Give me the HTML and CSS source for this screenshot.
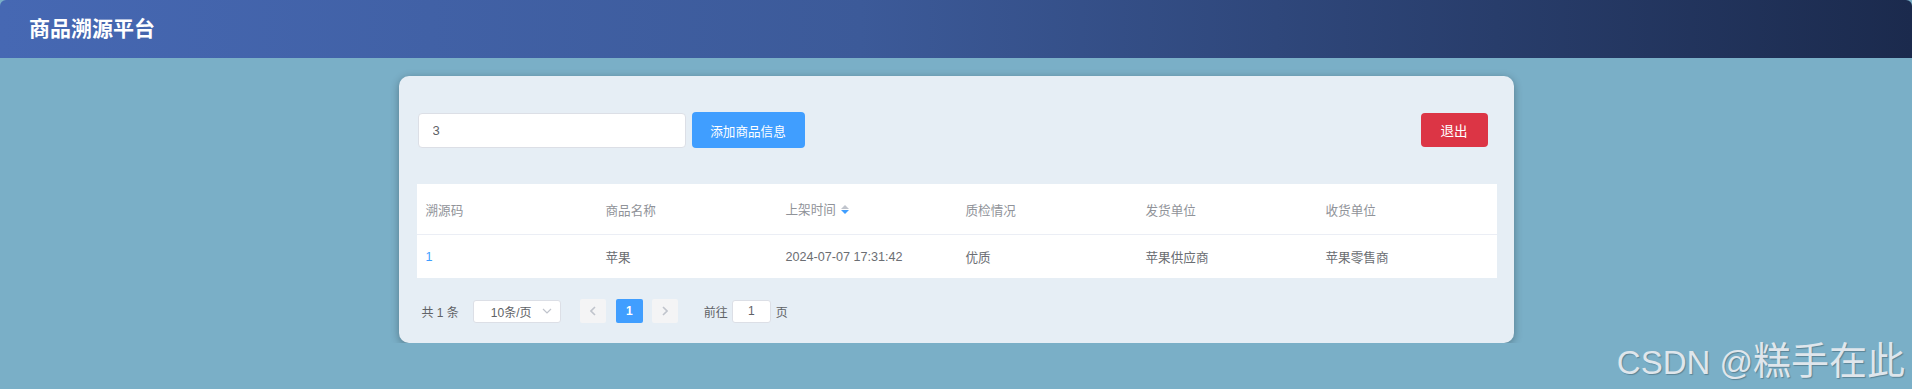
FILE: index.html
```html
<!DOCTYPE html>
<html>
<head>
<meta charset="utf-8">
<title>商品溯源平台</title>
<link rel="stylesheet" href="styles.css">
</head>

<body>

<section id="header">
  <h2>商品溯源平台</h2>
</section>

<section class="main-content">
  <div class="card">
    <div class="toolbar">
      <input class="search-input" type="text" value="3">
      <button class="btn btn-primary" type="button">添加商品信息</button>
      <button class="btn btn-danger btn-exit" type="button">退出</button>
    </div>

    <table class="goods-table">
      <thead>
        <tr>
          <th>溯源码</th>
          <th>商品名称</th>
          <th>上架时间 <span class="caret-wrapper"><i class="caret caret-up"></i><i class="caret caret-down"></i></span></th>
          <th>质检情况</th>
          <th>发货单位</th>
          <th>收货单位</th>
        </tr>
      </thead>
      <tbody>
        <tr>
          <td class="code">1</td>
          <td>苹果</td>
          <td>2024-07-07 17:31:42</td>
          <td>优质</td>
          <td>苹果供应商</td>
          <td>苹果零售商</td>
        </tr>
      </tbody>
    </table>

    <div class="pagination">
      <span class="total">共 1 条</span>
      <div class="page-size">
        <span>10条/页</span>
        <svg class="arrow-down" width="10" height="6" viewBox="0 0 10 6"><polyline points="1,1 5,5 9,1" fill="none" stroke="#c0c4cc" stroke-width="1.2"/></svg>
      </div>
      <button class="page-btn" type="button">
        <svg width="6" height="10" viewBox="0 0 6 10"><polyline points="5,1 1,5 5,9" fill="none" stroke="#c0c4cc" stroke-width="1.6"/></svg>
      </button>
      <span class="page-num active">1</span>
      <button class="page-btn" type="button">
        <svg width="6" height="10" viewBox="0 0 6 10"><polyline points="1,1 5,5 1,9" fill="none" stroke="#c0c4cc" stroke-width="1.6"/></svg>
      </button>
      <span class="jump">前往</span>
      <input class="jump-input" type="text" value="1">
      <span class="jump-unit">页</span>
    </div>
  </div>
</section>

<div class="watermark">CSDN @<span class="cjk">糕手在此</span></div>

</body>
</html>
```

FILE: styles.css
```css
body {
  background-color: #7aafc7;
  color: #606266;
  font-family: 'Liberation Sans', 'Noto Sans CJK SC', sans-serif;
  margin: 0;
  overflow: hidden;
  padding: 0;
}

h2,
p {
  margin: 0;
  padding: 0;
}

button,
input {
  font-family: inherit;
}


/* Top header */
#header {
  background-image: linear-gradient(90deg, #4668b3 0%, #3c5a99 45%, #1b2a4d 100%);
  border-radius: 6px 6px 0 0;
  height: 58px;
}
#header h2 {
  color: #fff;
  font-size: 21px;
  font-weight: bold;
  line-height: 58px;
  padding-left: 29px;
}


/* Main card */
.main-content {
  padding-top: 18px;
}

.card {
  background-color: #e6eef5;
  border-radius: 10px;
  box-shadow: 0 2px 8px rgba(0, 0, 0, 0.3);
  box-sizing: border-box;
  margin: 0 auto;
  padding: 36px 17px 20px 18px;
  width: 1115px;
}

.toolbar {
  align-items: center;
  display: flex;
  height: 36px;
}

.search-input {
  background: #fff;
  border: 1px solid #dcdfe6;
  border-radius: 4px;
  box-sizing: border-box;
  color: #606266;
  font-size: 13px;
  height: 35px;
  margin-left: 1px;
  outline: none;
  padding: 0 14px;
  width: 268px;
}

.btn {
  border: 0;
  border-radius: 4px;
  color: #fff;
  cursor: pointer;
}
.btn-primary {
  background-color: #409eff;
  font-size: 12.6px;
  height: 36px;
  margin-left: 6px;
  width: 113px;
}
.btn-danger {
  background-color: #dc3545;
  font-size: 13.5px;
  height: 34px;
  width: 67px;
}
.btn-exit {
  margin-left: auto;
  margin-right: 9px;
}


/* Table */
.goods-table {
  background: #fff;
  border-collapse: collapse;
  font-size: 12.6px;
  margin-top: 36px;
  table-layout: fixed;
  width: 1080px;
}
.goods-table th,
.goods-table td {
  padding: 0 0 0 9px;
  text-align: left;
}
.goods-table th {
  border-bottom: 1px solid #ebeef5;
  color: #909399;
  font-weight: normal;
  height: 50px;
}
.goods-table td {
  color: #6b6e73;
  height: 43px;
}
.goods-table td.code {
  color: #409eff;
}

.caret-wrapper {
  display: inline-block;
  height: 16px;
  margin-left: 1px;
  position: relative;
  vertical-align: middle;
  width: 10px;
}
.caret {
  border: 4px solid transparent;
  height: 0;
  left: 1px;
  position: absolute;
  width: 0;
}
.caret-up {
  border-bottom-color: #c0c4cc;
  top: -2px;
}
.caret-down {
  border-top-color: #409eff;
  top: 7px;
}


/* Pagination */
.pagination {
  align-items: center;
  display: flex;
  font-size: 12px;
  height: 24px;
  margin-top: 21px;
  padding-left: 5px;
}

.page-size {
  align-items: center;
  background: #fff;
  border: 1px solid #dcdfe6;
  border-radius: 3px;
  box-sizing: border-box;
  display: flex;
  height: 23px;
  justify-content: space-between;
  margin: 0 19px 0 14px;
  padding: 0 8px 0 17px;
  width: 88px;
}

.page-btn {
  align-items: center;
  background: #f4f4f5;
  border: 0;
  border-radius: 2px;
  display: flex;
  height: 24px;
  justify-content: center;
  padding: 0;
  width: 26px;
}

.page-num {
  border-radius: 2px;
  font-weight: bold;
  height: 24px;
  line-height: 24px;
  margin: 0 9px 0 10px;
  text-align: center;
  width: 27px;
}
.page-num.active {
  background: #409eff;
  color: #fff;
}

.jump {
  margin-left: 26px;
}

.jump-input {
  background: #fff;
  border: 1px solid #dcdfe6;
  border-radius: 3px;
  box-sizing: border-box;
  color: #606266;
  font-size: 12px;
  height: 23px;
  margin: 0 5px 0 4px;
  outline: none;
  padding: 0;
  text-align: center;
  width: 39px;
}


/* CSDN watermark over the page corner */
.watermark {
  color: #dfe6ec;
  font-size: 33px;
  position: absolute;
  right: 7px;
  text-shadow: 1px 1px 1px rgba(0, 0, 0, 0.25);
  top: 330px;
  white-space: nowrap;
}
.watermark .cjk {
  font-size: 38px;
}
```
